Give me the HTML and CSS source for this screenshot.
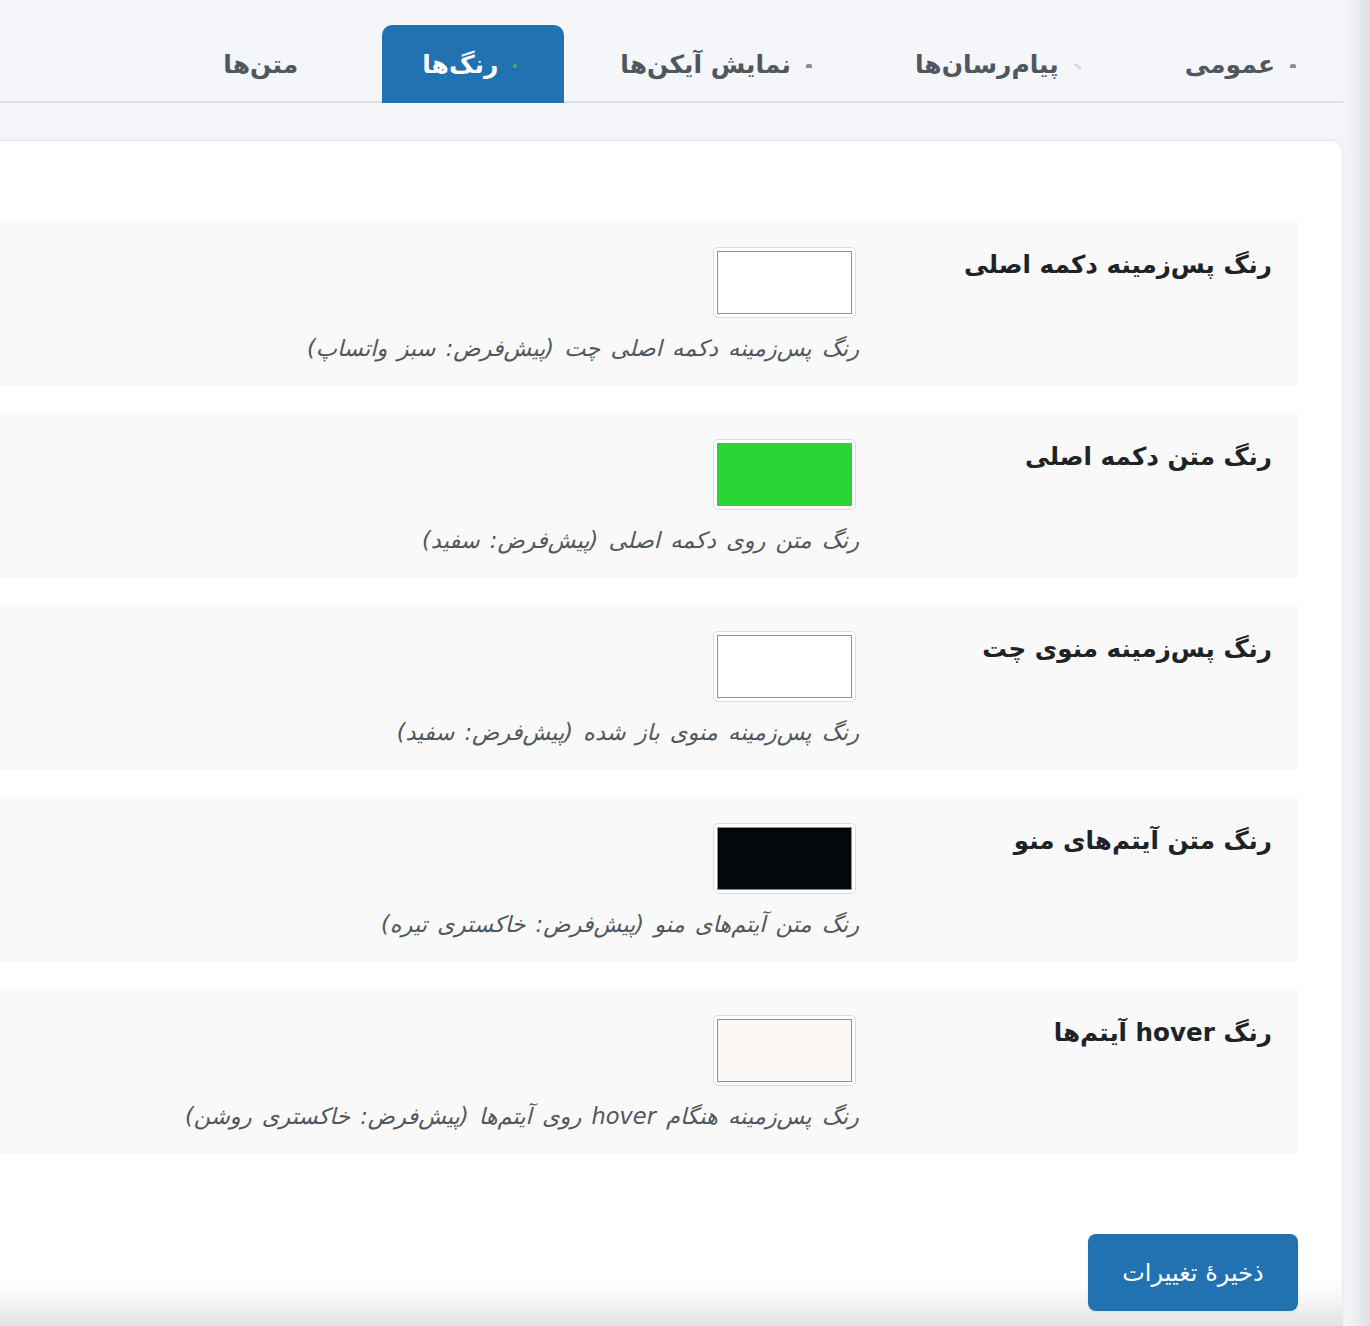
FILE: index.html
```html
<!DOCTYPE html>
<html lang="fa" dir="rtl">
<head>
    <meta charset="utf-8">
    <title>تنظیمات دکمه چت</title>
    <link rel="stylesheet" href="styles.css">
</head>
<body>
    <div class="wrap">
        <nav class="tabs">
            <a class="tab"><span class="tab-icon"></span>عمومی</a>
            <a class="tab"><span class="tab-icon light"></span>پیام‌رسان‌ها</a>
            <a class="tab"><span class="tab-icon"></span>نمایش آیکن‌ها</a>
            <a class="tab active"><span class="tab-icon green"></span>رنگ‌ها</a>
            <a class="tab"><span class="tab-icon none"></span>متن‌ها</a>
        </nav>

        <div class="card">
            <div class="field-row">
                <div class="field-label">رنگ پس‌زمینه دکمه اصلی</div>
                <div class="field-body">
                    <div class="swatch"><span class="swatch-fill" style="background:#ffffff"></span></div>
                    <p class="field-desc">رنگ پس‌زمینه دکمه اصلی چت (پیش‌فرض: سبز واتساپ)</p>
                </div>
            </div>

            <div class="field-row">
                <div class="field-label">رنگ متن دکمه اصلی</div>
                <div class="field-body">
                    <div class="swatch"><span class="swatch-fill" style="background:#2ad636"></span></div>
                    <p class="field-desc">رنگ متن روی دکمه اصلی (پیش‌فرض: سفید)</p>
                </div>
            </div>

            <div class="field-row">
                <div class="field-label">رنگ پس‌زمینه منوی چت</div>
                <div class="field-body">
                    <div class="swatch"><span class="swatch-fill" style="background:#ffffff"></span></div>
                    <p class="field-desc">رنگ پس‌زمینه منوی باز شده (پیش‌فرض: سفید)</p>
                </div>
            </div>

            <div class="field-row">
                <div class="field-label">رنگ متن آیتم‌های منو</div>
                <div class="field-body">
                    <div class="swatch"><span class="swatch-fill" style="background:#03080a"></span></div>
                    <p class="field-desc">رنگ متن آیتم‌های منو (پیش‌فرض: خاکستری تیره)</p>
                </div>
            </div>

            <div class="field-row">
                <div class="field-label">رنگ hover آیتم‌ها</div>
                <div class="field-body">
                    <div class="swatch"><span class="swatch-fill" style="background:#fcf8f5"></span></div>
                    <p class="field-desc">رنگ پس‌زمینه هنگام hover روی آیتم‌ها (پیش‌فرض: خاکستری روشن)</p>
                </div>
            </div>

            <div class="actions">
                <button class="button-save">ذخیرهٔ تغییرات</button>
            </div>
        </div>
    </div>
</body>
</html>
```

FILE: styles.css
```css
html, body {
    height: 100%;
}

body {
    margin: 0;
    padding-right: 27px;
    overflow: hidden;
    font-family: "DejaVu Sans", "Noto Sans", sans-serif;
    background: linear-gradient(to left, #dcdfe5, #eceef2 14px, #f5f6f9 30px);
}

.wrap {
    width: 1500px;
    height: 100%;
    display: flex;
    flex-direction: column;
}

.tabs {
    display: flex;
    gap: 16px;
    padding-top: 25px;
    height: 76px;
    border-bottom: 2px solid #dfe0e4;
}

.tab {
    display: flex;
    align-items: center;
    padding: 0 47px 0 40px;
    font-size: 25px;
    font-weight: bold;
    color: #50575e;
    border-radius: 10px 10px 0 0;
    margin-bottom: -2px;
}

.tab.active {
    background-color: #2271b1;
    color: #fff;
}

.tab-icon {
    width: 6px;
    height: 4px;
    margin-left: 15px;
    margin-top: 4px;
    background: #8a8e94;
    border-radius: 2px 2px 0 0;
}

.tab-icon.light {
    background: #d6d8dc;
    width: 8px;
    height: 3px;
    transform: rotate(40deg);
}

.tab-icon.green {
    background: #4caf50;
    width: 4px;
    height: 4px;
    border-radius: 50%;
}

.tab-icon.none {
    background: transparent;
}

.card {
    flex: 1;
    margin-top: 37px;
    padding: 80px 44px 0 0;
    border: 1px solid #e6e7eb;
    border-left: none;
    border-bottom: none;
    border-radius: 0 12px 0 0;
    background: linear-gradient(to bottom, #ffffff calc(100% - 44px), #f3f3f4 calc(100% - 22px), #e2e2e4);
    box-shadow: -2px 0 8px rgba(0, 0, 0, 0.03);
}

.field-row {
    display: flex;
    height: 165px;
    box-sizing: border-box;
    margin-bottom: 27px;
    padding-top: 26px;
    background-color: #f9f9f9;
}

.field-label {
    width: 413px;
    padding-right: 26px;
    font-size: 24.6px;
    font-weight: bold;
    line-height: 36px;
    color: #1d2327;
}

.swatch {
    width: 143px;
    height: 71px;
    margin-right: 3px;
    box-sizing: border-box;
    padding: 3px;
    border: 1px solid #dcdcde;
    border-radius: 5px;
    background: #fff;
}

.swatch-fill {
    display: block;
    height: 100%;
    box-sizing: border-box;
    border: 1px solid #8c8f94;
}

.field-desc {
    margin: 14px 0 0;
    font-size: 22.5px;
    font-style: italic;
    word-spacing: 3px;
    line-height: 32px;
    color: #50575e;
}

.actions {
    display: flex;
    padding-top: 53px;
}

.button-save {
    width: 210px;
    height: 77px;
    border: none;
    border-radius: 8px;
    background-color: #2271b1;
    color: #fff;
    font-family: "DejaVu Sans", sans-serif;
    font-size: 24px;
    box-shadow: 0 1px 3px rgba(0, 0, 0, 0.08);
}
```
